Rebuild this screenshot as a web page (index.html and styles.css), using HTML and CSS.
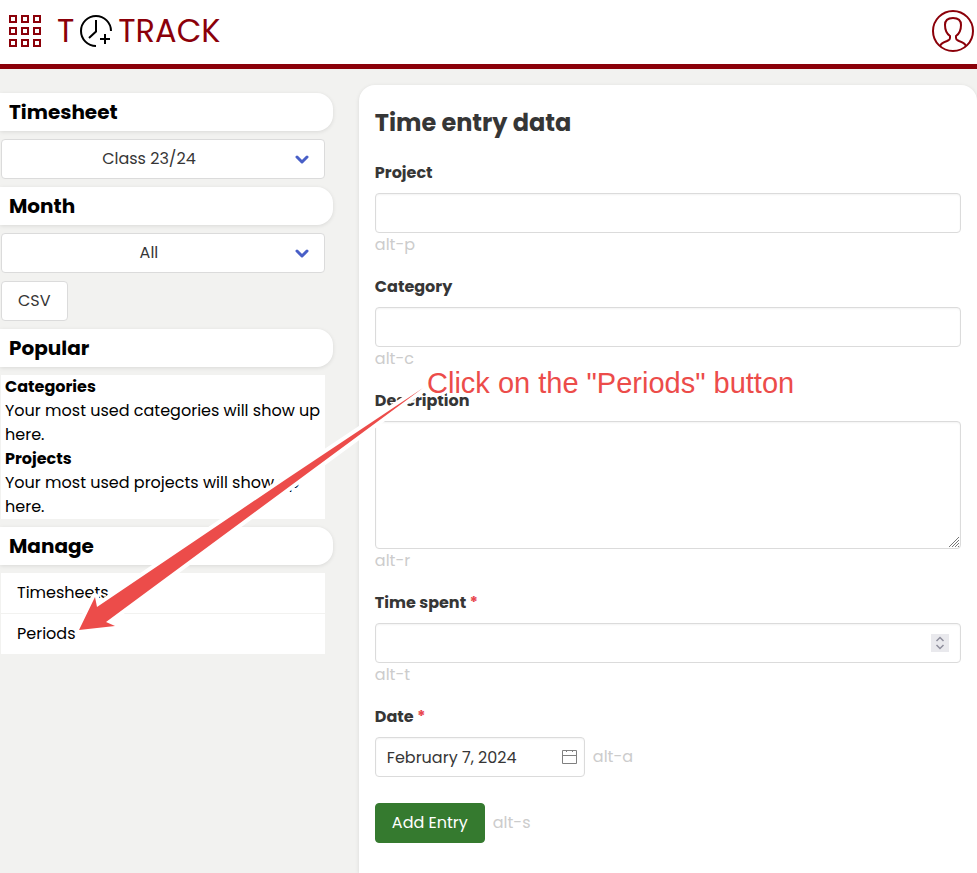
FILE: index.html
```
<!DOCTYPE html>
<html lang="en">
<head>
<meta charset="utf-8">
<meta name="viewport" content="width=device-width, initial-scale=1">
<title>Time entry</title>
<link rel="stylesheet" href="styles.css">
</head>
<body>
<header class="topbar">
  <button class="icon-button" type="button" aria-label="Apps">
    <svg width="32" height="32" viewBox="0 0 32 32" fill="none" stroke="currentColor" stroke-width="2">
      <path d="M1 1h6v6h-6zM13 1h6v6h-6zM25 1h6v6h-6zM1 13h6v6h-6zM13 13h6v6h-6zM25 13h6v6h-6zM1 25h6v6h-6zM13 25h6v6h-6zM25 25h6v6h-6z"/>
    </svg>
  </button>
  <a class="brand" href="#">
    <span>T</span>
    <svg width="32" height="32" viewBox="0 0 32 32" fill="none" stroke="#000" stroke-width="2">
      <path d="M16 31A15 15 0 1 1 31 16M16 5v11.500l-7 6.500M20 24h10M25 19v10"/>
    </svg>
    <span>TRACK</span>
  </a>
  <button class="icon-button user" type="button" aria-label="Account">
    <svg width="42" height="42" viewBox="0 0 42 42" fill="none" stroke="currentColor" stroke-width="2">
      <circle cx="21" cy="21" r="20"/>
      <path d="M8 36c1-3 4-4 7-5 2-1 3-1 3-3v-2c-3-2-5-6-5-11 0-5 3-7 8-7s8 2 8 7c0 5-2 9-5 11v2c0 2 1 2 3 3 3 1 6 2 7 5"/>
    </svg>
  </button>
</header>

<div class="layout">
  <aside class="sidebar">
    <h2 class="side-title"><label for="timesheet">Timesheet</label></h2>
    <div class="select">
      <select id="timesheet"><option>Class 23/24</option></select>
      <svg class="chevron" width="14" height="9" viewBox="0 0 14 9" fill="none" stroke="#485fc7" stroke-width="3" stroke-linecap="round" stroke-linejoin="round"><path d="M2 2l5 5 5-5"/></svg>
    </div>
    <h2 class="side-title"><label for="month">Month</label></h2>
    <div class="select">
      <select id="month"><option>All</option></select>
      <svg class="chevron" width="14" height="9" viewBox="0 0 14 9" fill="none" stroke="#485fc7" stroke-width="3" stroke-linecap="round" stroke-linejoin="round"><path d="M2 2l5 5 5-5"/></svg>
    </div>
    <button class="button" type="button">CSV</button>
    <h2 class="side-title">Popular</h2>
    <div class="popular">
      <h3>Categories</h3>
      <p>Your most used categories will show up here.</p>
      <h3>Projects</h3>
      <p>Your most used projects will show up here.</p>
    </div>
    <h2 class="side-title">Manage</h2>
    <nav class="menu">
      <a href="#">Timesheets</a>
      <a href="#">Periods</a>
    </nav>
  </aside>

  <main class="card">
    <h1>Time entry data</h1>
    <form>
      <div class="field">
        <label for="project">Project</label>
        <input class="input" id="project" type="text">
        <p class="help">alt-p</p>
      </div>
      <div class="field">
        <label for="category">Category</label>
        <input class="input" id="category" type="text">
        <p class="help">alt-c</p>
      </div>
      <div class="field">
        <label for="description">Description</label>
        <div class="control">
          <textarea class="input area" id="description"></textarea>
          <svg class="grip" width="12" height="12" viewBox="0 0 12 12" fill="none" stroke="#777"><path d="M1 11L11 1M4 11l7-7M7 11l4-4M10 11l1-1"/></svg>
        </div>
        <p class="help">alt-r</p>
      </div>
      <div class="field">
        <label for="spent">Time spent <span class="required">*</span></label>
        <div class="control">
          <input class="input" id="spent" type="number">
          <svg class="spinner" width="18" height="18" viewBox="0 0 18 18"><path fill="#e9e9ed" d="M0 0h18v18H0z"/><path d="M5.500 7l3.500-3.500L12.500 7M5.500 11l3.500 3.500 3.500-3.500" fill="none" stroke="#8f8f9d" stroke-width="1.500"/></svg>
        </div>
        <p class="help">alt-t</p>
      </div>
      <div class="field">
        <label for="date">Date <span class="required">*</span></label>
        <div class="row">
          <div class="control date">
            <input class="input" id="date" type="text" value="February 7, 2024">
            <svg class="calendar" width="16" height="16" viewBox="0 0 16 16" fill="none" stroke="#808080"><path d="M1.500 1.500h14v13H1.500zM1.500 6.500h14M5.500 1v2M11.500 1v2"/></svg>
          </div>
          <span class="help">alt-a</span>
        </div>
      </div>
      <div class="row submit">
        <button class="button primary" type="submit">Add Entry</button>
        <span class="help">alt-s</span>
      </div>
    </form>
  </main>
</div>

<div class="callout">
  <svg width="430" height="640" viewBox="0 0 430 640"><path d="M423 388L106 622L115 626L79 630L95 597L97 607L285 480Z" fill="#ec4c4a" stroke="#fff" stroke-width="8" stroke-linejoin="round" paint-order="stroke"/></svg>
  <p>Click on the "Periods" button</p>
</div>
</body>
</html>
```
FILE: styles.css
```
* { box-sizing: border-box; }

body {
  margin: 0;
  min-height: 100vh;
  display: flex;
  flex-direction: column;
  position: relative;
  background: #f2f2f0;
  color: #363636;
  font: 16px/24px Poppins, Inter, sans-serif;
}

h1, h2, h3, p { margin: 0; }
input, select, textarea, button { font: inherit; color: inherit; }
a { color: inherit; text-decoration: none; }
svg { display: block; flex: none; }

.topbar {
  display: flex;
  align-items: center;
  gap: 16px;
  height: 69px;
  padding: 0 3px 2px 9px;
  background: #fff;
  border-bottom: 5px solid #8b0009;
  color: #8b0009;
}
.icon-button { padding: 0; border: 0; background: none; }
.user { margin-left: auto; }
.brand {
  display: flex;
  align-items: center;
  gap: 6px;
  font-size: 32px;
  line-height: 40px;
}

.layout {
  flex: 1;
  display: grid;
  grid-template-columns: minmax(0, 35fr) minmax(0, 65fr);
  gap: 26px;
}

.sidebar {
  display: flex;
  flex-direction: column;
  align-items: flex-start;
  gap: 8px;
  padding-top: 24px;
  color: #000;
}
.side-title {
  width: 100%;
  padding: 4px 9px;
  border-radius: 0 16px 16px 0;
  background: #fff;
  box-shadow: 0 1px 4px #0000001a;
  font-size: 20px;
  line-height: 30px;
  font-weight: 700;
}
.select, .popular, .menu {
  align-self: stretch;
  margin: 0 8px 0 1px;
}
.select { position: relative; color: #363636; }
.select select {
  width: 100%;
  height: 40px;
  padding: 0 40px 0 12px;
  appearance: none;
  border: 1px solid #dbdbdb;
  border-radius: 4px;
  background: #fff;
  text-align: center;
  text-align-last: center;
}
.chevron { position: absolute; right: 16px; top: 16px; pointer-events: none; }

.button {
  height: 40px;
  margin-left: 1px;
  padding: 0 16px;
  border: 1px solid #dbdbdb;
  border-radius: 4px;
  background: #fff;
  color: #363636;
}
.popular { padding: 0 4px; background: #fff; }
.popular h3 { font-size: 16px; line-height: 24px; }
.menu { background: #fff; }
.menu a { display: block; padding: 8px 16px; }
.menu a + a { border-top: 1px solid #f2f2f0; }

.card {
  margin-top: 16px;
  padding: 20px 16px;
  background: #fff;
  border-radius: 16px 16px 0 0;
  box-shadow: 0 1px 4px #0000001a;
}
.card h1 {
  margin-bottom: 20px;
  font-size: 24px;
  line-height: 36px;
}
.field { margin-bottom: 18px; }
.field label { display: block; margin-bottom: 8px; font-weight: 700; }
.required { color: #e8484f; }
.input {
  display: block;
  width: 100%;
  height: 40px;
  padding: 0 11px;
  border: 1px solid #dbdbdb;
  border-radius: 4px;
  background: #fff;
  box-shadow: inset 0 1px 2px #0000000d;
}
.area { height: 128px; padding: 8px 11px; resize: vertical; }
.area::-webkit-resizer { background: none; }
.grip { position: absolute; right: 1px; bottom: 1px; pointer-events: none; }
.help { color: #ccc; }
.control { position: relative; }
.control input { appearance: textfield; }
.spinner { position: absolute; right: 12px; top: 11px; }
.date { width: 210px; }
.calendar { position: absolute; right: 8px; top: 12px; }
.row { display: flex; align-items: center; gap: 8px; }
.submit { margin-top: 26px; }
.primary { margin: 0; border-color: #357a2f; background: #357a2f; color: #fff; }

.callout { position: absolute; left: 0; top: 0; pointer-events: none; }
.callout p {
  position: absolute;
  left: 427px;
  top: 365px;
  white-space: nowrap;
  font: 29px/36px "Liberation Sans", sans-serif;
  color: #ec4c4a;
  -webkit-text-stroke: 6px #fff;
  paint-order: stroke fill;
}
```
